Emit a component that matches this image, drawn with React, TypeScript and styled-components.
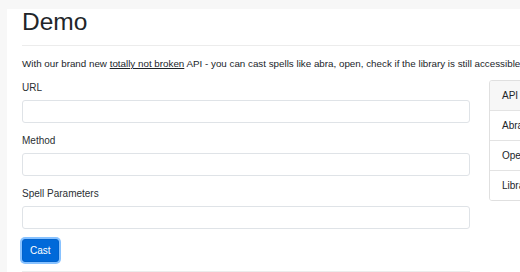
import React from "react";
import styled, { createGlobalStyle } from "styled-components";

const GlobalStyle = createGlobalStyle`
  html, body {
    margin: 0;
    padding: 0;
    background: #f7f7f7;
    font-family: "Liberation Sans", Arial, sans-serif;
    color: #212529;
  }
  * { box-sizing: border-box; }
`;

const Page = styled.main`
  margin: 9px 0 0 7px;
  height: 263px;
  background: #ffffff;
  padding: 0 0 0 15px;
  overflow: hidden;
`;

const Title = styled.h1`
  margin: -2px 0 0 0;
  font-size: 24.5px;
  font-weight: 400;
  line-height: 1.2;
`;

const Rule = styled.hr`
  margin: 9px 0 10px 0;
  border: 0;
  border-top: 1px solid #ececec;
`;

const Intro = styled.p`
  margin: 0 0 9px 0;
  font-size: 9.8px;
  line-height: 15px;
  white-space: nowrap;
`;

const FakeLink = styled.a`
  color: #212529;
  text-decoration: underline;
`;

const Row = styled.div`
  display: flex;
  gap: 19px;
  align-items: flex-start;
`;

const Form = styled.form`
  flex: 0 0 448px;
`;

const Field = styled.div`
  margin-bottom: 10px;
`;

const Label = styled.label`
  display: block;
  margin-bottom: 5px;
  font-size: 10px;
  line-height: 15px;
  color: #2b2f33;
`;

const Input = styled.input`
  display: block;
  width: 100%;
  height: 23px;
  padding: 3px 7px;
  font-size: 10px;
  font-family: inherit;
  border: 1px solid #dfe3e7;
  border-radius: 3px;
  background: #fff;
`;

const CastButton = styled.button`
  height: 23px;
  padding: 0 7px;
  font-family: inherit;
  font-size: 10px;
  color: #fff;
  background: #0069d9;
  border: 1px solid #0062cc;
  border-radius: 3px;
  box-shadow: 0 0 0 2px rgba(38, 143, 255, 0.55);
`;

const BottomRule = styled.hr`
  margin: 9px 0 0 0;
  border: 0;
  border-top: 1px solid #ececec;
`;

const Card = styled.div`
  flex: 0 0 200px;
  border: 1px solid #e0e0e0;
  border-radius: 3px;
  overflow: hidden;
`;

const CardItem = styled.div<{ $header?: boolean }>`
  padding: 7px 12px;
  font-size: 10px;
  line-height: 15px;
  background: ${(p) => (p.$header ? "#f7f7f7" : "#fff")};
  border-top: 1px solid #e3e3e3;
  &:first-child {
    border-top: 0;
  }
`;

const spells = ["Abra", "Open", "Library check"];

export default function App() {
  return (
    <>
      <GlobalStyle />
      <Page>
        <Title>Demo</Title>
        <Rule />
        <Intro>
          With our brand new <FakeLink href="#">totally not broken</FakeLink>{" "}
          API - you can cast spells like abra, open, check if the library is
          still accessible
        </Intro>
        <Row>
          <Form onSubmit={(e) => e.preventDefault()}>
            <Field>
              <Label>URL</Label>
              <Input />
            </Field>
            <Field>
              <Label>Method</Label>
              <Input />
            </Field>
            <Field>
              <Label>Spell Parameters</Label>
              <Input />
            </Field>
            <CastButton type="submit">Cast</CastButton>
            <BottomRule />
          </Form>
          <Card>
            <CardItem $header>API</CardItem>
            {spells.map((s) => (
              <CardItem key={s}>{s}</CardItem>
            ))}
          </Card>
        </Row>
      </Page>
    </>
  );
}
